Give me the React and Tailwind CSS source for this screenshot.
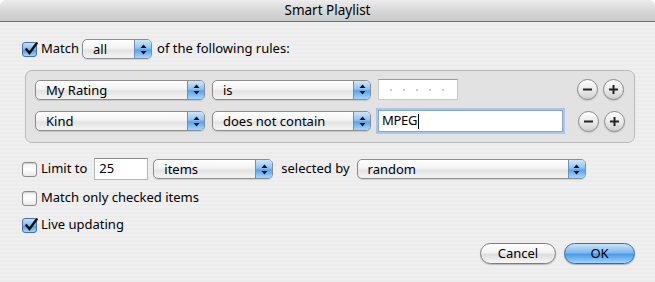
import React from 'react';

const font = { fontFamily: '"Noto Sans", "Liberation Sans", sans-serif' };

const Arrows = () => (
  <svg width="7" height="11" viewBox="0 0 7 11">
    <path d="M3.5 0.5 L6.5 4 L0.5 4 Z" fill="#111" />
    <path d="M3.5 10.5 L6.5 7 L0.5 7 Z" fill="#111" />
  </svg>
);

const Popup = ({ label, className }) => (
  <div
    className={`flex h-[20px] items-stretch rounded-[5px] border border-[#8c8c8c] bg-[linear-gradient(#ffffff,#f3f3f3_45%,#e3e3e3_55%,#f4f4f4)] shadow-[0_1px_1px_rgba(0,0,0,0.12)] overflow-hidden ${className}`}
  >
    <span className="flex-1 pl-[10px] text-[13px] leading-[18px] text-black">{label}</span>
    <span className="flex w-[17px] items-center justify-center border-l border-[#6d8fbf] bg-[linear-gradient(#cfe6fb,#8ec3f3_45%,#5aa2ea_55%,#a9d6fb)]">
      <Arrows />
    </span>
  </div>
);

const Checkbox = ({ checked }) =>
  checked ? (
    <span className="relative inline-flex h-[15px] w-[15px] items-center justify-center rounded-[3px] border border-[#4a6fa0] bg-[linear-gradient(#c5e1fa,#7db8ee_50%,#4d98e6_55%,#a6d4fa)]">
      <svg width="14" height="14" viewBox="0 0 14 14" className="absolute -top-[1px] left-[1px]">
        <path d="M2.5 7.5 L5.5 11 L12.5 1.5" stroke="#111" strokeWidth="2.4" fill="none" strokeLinecap="square" />
      </svg>
    </span>
  ) : (
    <span className="inline-block h-[15px] w-[15px] rounded-[3px] border border-[#8a8a8a] bg-[linear-gradient(#f2f2f2,#ffffff_50%,#e8e8e8)] shadow-[inset_0_1px_1px_rgba(0,0,0,0.15)]" />
  );

const RoundBtn = ({ plus }) => (
  <span className="flex h-[21px] w-[21px] items-center justify-center rounded-full border border-[#8a8a8a] bg-[linear-gradient(#ffffff,#e6e6e6_60%,#cfcfcf)] shadow-[0_1px_1px_rgba(0,0,0,0.15)]">
    <svg width="11" height="11" viewBox="0 0 11 11">
      <rect x="1" y="4.5" width="9" height="2" fill="#222" />
      {plus && <rect x="4.5" y="1" width="2" height="9" fill="#222" />}
    </svg>
  </span>
);

const RatingField = () => (
  <div className="flex h-[21px] w-[80px] items-center gap-[11px] border border-[#c8c8c8] border-t-[#9a9a9a] bg-white pl-[11px]">
    {[0, 1, 2, 3, 4].map((i) => (
      <span key={i} className="h-[2px] w-[2px] rounded-full bg-[#b8b8b8]" />
    ))}
  </div>
);

export default function App() {
  return (
    <div
      className="h-[282px] w-[655px] overflow-hidden rounded-t-[6px] bg-[repeating-linear-gradient(0deg,#ececec_0px,#ececec_2px,#efefef_2px,#efefef_4px)] text-[13px] text-black"
      style={font}
    >
      {/* Title bar */}
      <div className="flex h-[22px] items-center justify-center border-b border-[#6f6f6f] bg-[linear-gradient(#ececec,#d8d8d8_50%,#c9c9c9)] text-[13.5px]">
        Smart Playlist
      </div>

      <div className="pl-[22px]">
        {/* Match row */}
        <div className="mt-[17px] flex h-[20px] items-center">
          <Checkbox checked />
          <span className="ml-[4px]">Match</span>
          <Popup label="all" className="ml-[3px] w-[70px]" />
          <span className="ml-[5px]">of the following rules:</span>
        </div>

        {/* Rules box */}
        <div className="mt-[11px] ml-[3px] w-[610px] rounded-[7px] border border-[#b9b9b9] bg-[#e2e2e2] pb-[10px] pt-[8px] pl-[9px]">
          <div className="flex h-[21px] items-center">
            <Popup label="My Rating" className="w-[170px]" />
            <Popup label="is" className="ml-[7px] w-[159px]" />
            <span className="ml-[7px]"><RatingField /></span>
            <span className="ml-[119px] flex gap-[5px]">
              <RoundBtn />
              <RoundBtn plus />
            </span>
          </div>
          <div className="mt-[10px] flex h-[22px] items-center">
            <Popup label="Kind" className="w-[170px]" />
            <Popup label="does not contain" className="ml-[7px] w-[159px]" />
            <div className="ml-[7px] flex h-[22px] w-[185px] items-center border border-[#8aa7c8] bg-white pl-[3px] shadow-[0_0_0_2px_#a9c7ea]">
              <span className="text-[13px] tracking-[-0.3px]">MPEG</span>
              <span className="ml-[1px] h-[15px] w-[1px] bg-black" />
            </div>
            <span className="ml-[15px] flex gap-[5px]">
              <RoundBtn />
              <RoundBtn plus />
            </span>
          </div>
        </div>

        {/* Limit row */}
        <div className="mt-[15px] flex h-[22px] items-center">
          <Checkbox />
          <span className="ml-[4px]">Limit to</span>
          <div className="ml-[7px] flex h-[22px] w-[54px] items-center border border-[#b5b5b5] border-t-[#8c8c8c] bg-white pl-[4px]">
            25
          </div>
          <Popup label="items" className="ml-[5px] w-[120px]" />
          <span className="ml-[8px]">selected by</span>
          <Popup label="random" className="ml-[7px] w-[229px]" />
        </div>

        <div className="mt-[9px] flex h-[18px] items-center">
          <Checkbox />
          <span className="ml-[4px]">Match only checked items</span>
        </div>

        <div className="mt-[9px] flex h-[18px] items-center">
          <Checkbox checked />
          <span className="ml-[4px]">Live updating</span>
        </div>
      </div>

      {/* Buttons */}
      <div className="mt-[9px] flex justify-end gap-[8px] pr-[20px]">
        <button className="h-[21px] w-[76px] rounded-full border border-[#7d7d7d] bg-[linear-gradient(#ffffff,#f2f2f2_45%,#dedede_55%,#f6f6f6)] text-[13px] leading-[19px] shadow-[0_1px_1px_rgba(0,0,0,0.2)]">
          Cancel
        </button>
        <button className="h-[21px] w-[71px] rounded-full border border-[#3d6aa6] bg-[linear-gradient(#cbe4fb,#7fb9f0_45%,#4d9ae8_55%,#9fd6fc)] text-[13px] leading-[19px] shadow-[0_1px_1px_rgba(0,0,0,0.25)]">
          OK
        </button>
      </div>
    </div>
  );
}
